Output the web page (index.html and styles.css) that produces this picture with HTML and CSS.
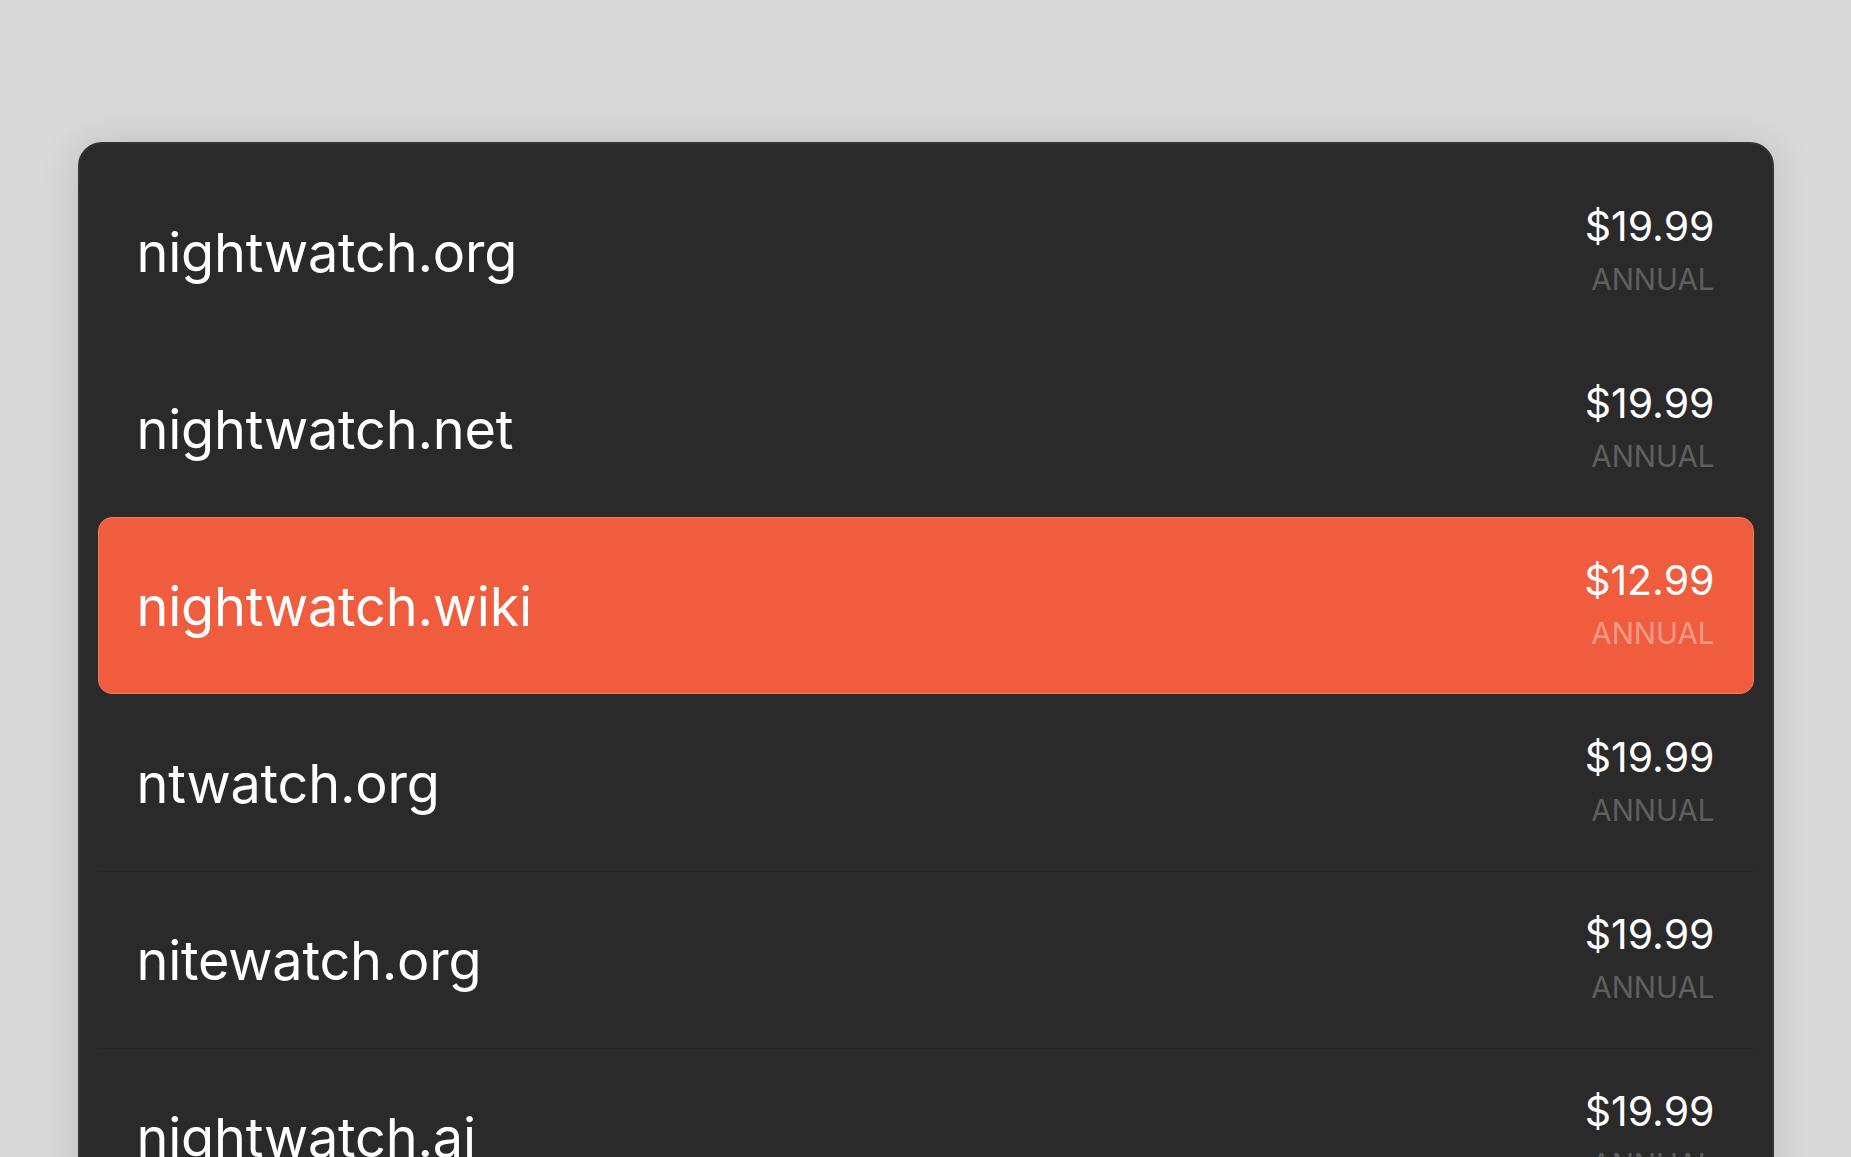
FILE: index.html
```html
<!DOCTYPE html>
<html lang="en">
<head>
    <meta charset="UTF-8">
    <meta name="viewport" content="width=device-width, initial-scale=1.0">
    <title>Domains</title>
    <link rel="stylesheet" href="styles.css">
</head>
<body>
    <div class="domain-list">
        <div class="domain">
            <div class="domain-name">nightwatch.org</div>
            <div class="domain-price">
                <span class="price">$19.99</span>
                <span class="period">ANNUAL</span>
            </div>
        </div>
        <div class="domain">
            <div class="domain-name">nightwatch.net</div>
            <div class="domain-price">
                <span class="price">$19.99</span>
                <span class="period">ANNUAL</span>
            </div>
        </div>
        <div class="domain selected">
            <div class="domain-name">nightwatch.wiki</div>
            <div class="domain-price">
                <span class="price">$12.99</span>
                <span class="period">ANNUAL</span>
            </div>
        </div>
        <div class="domain">
            <div class="domain-name">ntwatch.org</div>
            <div class="domain-price">
                <span class="price">$19.99</span>
                <span class="period">ANNUAL</span>
            </div>
        </div>
        <div class="domain divided">
            <div class="domain-name">nitewatch.org</div>
            <div class="domain-price">
                <span class="price">$19.99</span>
                <span class="period">ANNUAL</span>
            </div>
        </div>
        <div class="domain divided">
            <div class="domain-name">nightwatch.ai</div>
            <div class="domain-price">
                <span class="price">$19.99</span>
                <span class="period">ANNUAL</span>
            </div>
        </div>
    </div>
</body>
</html>
```

FILE: styles.css
```css
html {
    overflow: hidden;
}
body {
    font-family: Inter, "Noto Sans", sans-serif;
    background-color: #d9d9d9;
    color: white;
    margin: 0;
    padding-top: 142px;
}
.domain-list {
    box-sizing: border-box;
    width: 1696px;
    margin: 0 auto;
    padding: 19px 18px;
    background-color: #2a2a2a;
    border: 2px solid #333;
    border-radius: 24px;
    box-shadow: 0 0 40px rgba(0, 0, 0, 0.12);
}
.domain {
    display: flex;
    justify-content: space-between;
    align-items: center;
    height: 177px;
    box-sizing: border-box;
    padding: 0 38px;
    border: 1px solid transparent;
}
.divided {
    border-top-color: #252525;
}
.domain-name {
    font-size: 54px;
    letter-spacing: -0.2px;
    padding-top: 2px;
}
.domain-price {
    display: flex;
    flex-direction: column;
    align-items: flex-end;
    padding-top: 5px;
}
.price {
    font-size: 41px;
    line-height: 50px;
}
.period {
    font-size: 29.5px;
    line-height: 56px;
    color: #5f5f5f;
}
.selected {
    background-color: #f05c3e;
    border: 1px solid #f5785c;
    border-radius: 14px;
}
.selected .period {
    color: rgba(255, 255, 255, 0.4);
}
```
